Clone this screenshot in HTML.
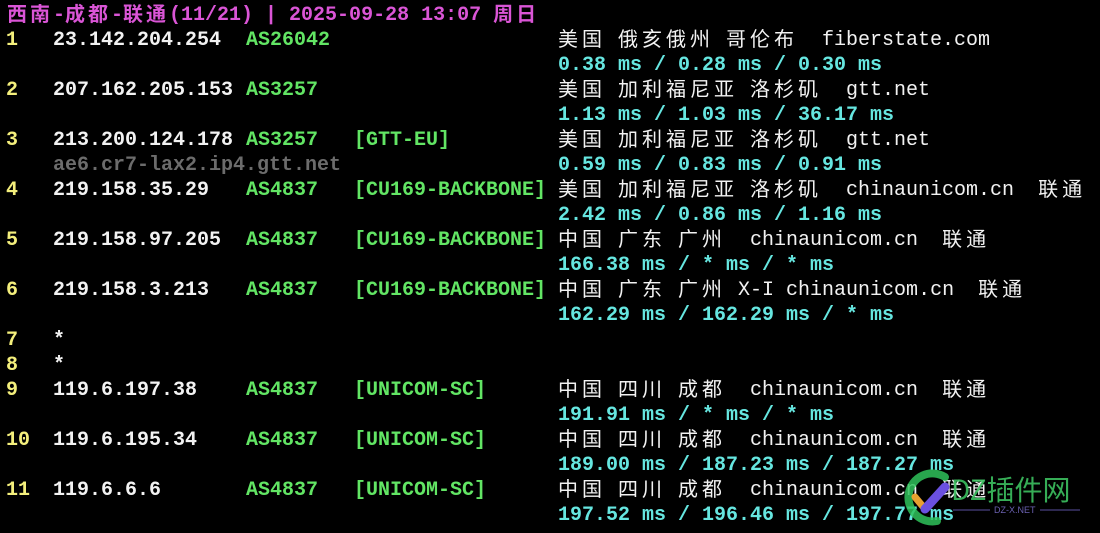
<!DOCTYPE html>
<html><head><meta charset="utf-8"><style>
body{margin:0;width:1100px;height:533px;background:#000;overflow:hidden;position:relative;font-family:"Liberation Mono","Noto Sans CJK SC",monospace;font-size:20px;font-weight:bold;}
.l{position:absolute;height:25px;line-height:25px;white-space:pre;}
.c{display:inline-block;height:25px;line-height:25px;vertical-align:top;position:relative;top:-3px;letter-spacing:4px;font-weight:normal;font-family:"Noto Sans CJK SC",sans-serif;font-size:20px;}
.m .c{letter-spacing:3px;font-weight:bold}
.loc{font-weight:normal}
.y{color:#f4ef7c}.w{color:#f2f2f2}.g{color:#62e564}.cy{color:#66e6e0}.gr{color:#6c6c6c}.m{color:#da55d6}
</style></head><body>
<div id="t"></div>
<script>
const R=[
[[0,'m','<span class="c">西南</span>-<span class="c">成都</span>-<span class="c">联通</span>(11/21) | 2025-09-28 13:07 <span class="c">周日</span>',7]],
[['1','23.142.204.254','AS26042','','<span class="c">美国</span> <span class="c">俄亥俄州</span> <span class="c">哥伦布</span>  fiberstate.com']],
[[0,'cy','0.38 ms / 0.28 ms / 0.30 ms',558]],
[['2','207.162.205.153','AS3257','','<span class="c">美国</span> <span class="c">加利福尼亚</span> <span class="c">洛杉矶</span>  gtt.net']],
[[0,'cy','1.13 ms / 1.03 ms / 36.17 ms',558]],
[['3','213.200.124.178','AS3257','[GTT-EU]','<span class="c">美国</span> <span class="c">加利福尼亚</span> <span class="c">洛杉矶</span>  gtt.net']],
[[0,'gr','ae6.cr7-lax2.ip4.gtt.net',53],[0,'cy','0.59 ms / 0.83 ms / 0.91 ms',558]],
[['4','219.158.35.29','AS4837','[CU169-BACKBONE]','<span class="c">美国</span> <span class="c">加利福尼亚</span> <span class="c">洛杉矶</span>  chinaunicom.cn  <span class="c">联通</span>']],
[[0,'cy','2.42 ms / 0.86 ms / 1.16 ms',558]],
[['5','219.158.97.205','AS4837','[CU169-BACKBONE]','<span class="c">中国</span> <span class="c">广东</span> <span class="c">广州</span>  chinaunicom.cn  <span class="c">联通</span>']],
[[0,'cy','166.38 ms / * ms / * ms',558]],
[['6','219.158.3.213','AS4837','[CU169-BACKBONE]','<span class="c">中国</span> <span class="c">广东</span> <span class="c">广州</span> X-I chinaunicom.cn  <span class="c">联通</span>']],
[[0,'cy','162.29 ms / 162.29 ms / * ms',558]],
[['7','*','','','']],
[['8','*','','','']],
[['9','119.6.197.38','AS4837','[UNICOM-SC]','<span class="c">中国</span> <span class="c">四川</span> <span class="c">成都</span>  chinaunicom.cn  <span class="c">联通</span>']],
[[0,'cy','191.91 ms / * ms / * ms',558]],
[['10','119.6.195.34','AS4837','[UNICOM-SC]','<span class="c">中国</span> <span class="c">四川</span> <span class="c">成都</span>  chinaunicom.cn  <span class="c">联通</span>']],
[[0,'cy','189.00 ms / 187.23 ms / 187.27 ms',558]],
[['11','119.6.6.6','AS4837','[UNICOM-SC]','<span class="c">中国</span> <span class="c">四川</span> <span class="c">成都</span>  chinaunicom.cn  <span class="c">联通</span>']],
[[0,'cy','197.52 ms / 196.46 ms / 197.77 ms',558]]
];
let h='';
R.forEach((row,i)=>{const top=2.5+25*i;
row.forEach(it=>{
 if(it[0]===0){h+=`<div class="l ${it[1]}" style="top:${top}px;left:${it[3]}px">${it[2]}</div>`;}
 else{const [n,ip,as,br,loc]=it;
 h+=`<div class="l y" style="top:${top}px;left:6px">${n}</div>`;
 h+=`<div class="l w" style="top:${top}px;left:53px">${ip}</div>`;
 h+=`<div class="l g" style="top:${top}px;left:246px">${as}</div>`;
 h+=`<div class="l g" style="top:${top}px;left:354px">${br}</div>`;
 h+=`<div class="l w loc" style="top:${top}px;left:558px">${loc}</div>`;}
});});
document.getElementById('t').innerHTML=h;
</script>
<svg style="position:absolute;left:895px;top:465px" width="205" height="68">
<path d="M50 12 A24 24 0 1 0 42 56" stroke="#2fc25a" stroke-width="8" fill="none" stroke-linecap="round" opacity="0.85"/>
<path d="M20 32 L30 44" stroke="#e8a030" stroke-width="7" stroke-linecap="round"/>
<path d="M30 44 L50 22" stroke="#6a50e0" stroke-width="9" stroke-linecap="round"/>
<text x="56" y="35" fill="#3cc060" font-family="Noto Sans CJK SC,sans-serif" font-size="28" font-weight="normal" opacity="0.9">DZ插件网</text>
<line x1="58" y1="45" x2="95" y2="45" stroke="#5a50a0"/><line x1="145" y1="45" x2="185" y2="45" stroke="#5a50a0"/>
<text x="99" y="48" fill="#6a60b0" font-family="Liberation Sans,sans-serif" font-size="9" font-weight="normal">DZ-X.NET</text>
</svg>
</body></html>
